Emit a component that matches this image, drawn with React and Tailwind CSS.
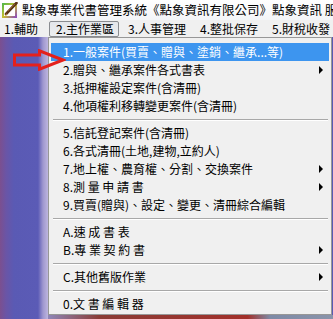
import React from "react";

const items = [
  { t: "1.一般案件(買賣、贈與、塗銷、繼承...等)", hl: true },
  { t: "2.贈與、繼承案件各式書表", sub: true },
  { t: "3.抵押權設定案件(含清冊)" },
  { t: "4.他項權利移轉變更案件(含清冊)" },
  { sep: true },
  { t: "5.信託登記案件(含清冊)" },
  { t: "6.各式清冊(土地,建物,立約人)" },
  { t: "7.地上權、農育權、分割、交換案件", sub: true },
  { t: "8.測 量 申 請 書", sub: true },
  { t: "9.買賣(贈與)、設定、變更、清冊綜合編輯" },
  { sep: true },
  { t: "A.速 成 書 表" },
  { t: "B.專 業 契 約 書", sub: true },
  { sep: true },
  { t: "C.其他舊版作業", sub: true },
  { sep: true },
  { t: "0.文 書 編 輯 器" },
];

function AppIcon() {
  return (
    <svg className="shrink-0" width="16" height="16" viewBox="0 0 16 16">
      <defs>
        <linearGradient id="ib" x1="0" y1="0" x2="1" y2="1">
          <stop offset="0" stopColor="#58b848" />
          <stop offset="0.5" stopColor="#c8c030" />
          <stop offset="1" stopColor="#9050b8" />
        </linearGradient>
      </defs>
      <rect x="1" y="2" width="13" height="13" fill="#ffffff" stroke="url(#ib)" strokeWidth="2" />
      <path d="M14.5 1 L4 12" stroke="#5a3418" strokeWidth="2.6" strokeLinecap="round" />
      <path d="M4.6 11.4 L2.6 14 L5.2 12.2 Z" fill="#e0a040" />
      <path d="M13 2 L6 9" stroke="#a06a30" strokeWidth="0.8" />
    </svg>
  );
}

export default function App() {
  return (
    <div
      className="relative w-[333px] h-[319px] overflow-hidden bg-[#5a5ab4] text-black"
      style={{ fontFamily: "'Noto Sans CJK TC', 'Noto Sans', sans-serif" }}
    >
      {/* Title bar */}
      <div className="h-[20px] flex items-center bg-[linear-gradient(to_bottom,#ffffff,#f3f5f8)] pl-[2px] whitespace-nowrap overflow-hidden">
        <AppIcon />
        <span className="ml-[4px] text-[12.5px] leading-none">
          點象專業代書管理系統《點象資訊有限公司》點象資訊 服務
        </span>
      </div>

      {/* Menu bar */}
      <div className="h-[17px] flex items-center bg-[#f0f0f0] pl-[4px] text-[12px] leading-none whitespace-nowrap">
        <div className="pr-[11px] h-[15px] flex items-center">1.輔助</div>
        <div className="pl-[6px] pr-[4px] h-[16px] flex items-center border border-[#8a8c90] rounded-[2px] bg-[linear-gradient(to_bottom,#e4e6ea,#eceef0)]">
          2.主作業區
        </div>
        <div className="pl-[9px] pr-[7px] h-[15px] flex items-center">3.人事管理</div>
        <div className="px-[7px] h-[15px] flex items-center">4.整批保存</div>
        <div className="pl-[7px] h-[15px] flex items-center">5.財稅收發</div>
      </div>

      {/* Body */}
      <div className="flex h-[282px]">
        <div className="w-[48px] h-full bg-[linear-gradient(to_right,#7b4f8f_0px,#6a55a6_6px,#5a5ab4_14px,#5b5bb6_38px,#9f97cf_43px,#bdb5df_48px)]" />
        <div className="flex-1 flex flex-col">
          <div className="h-[278px] mr-[1px] border border-[#979797] bg-[#f0f0f0] pt-[5px] pb-[1px] text-[12px] leading-none">
            {items.map((it, i) =>
              it.sep ? (
                <div key={i} className="h-[9px] flex flex-col justify-center ml-[4px] mr-[3px]">
                  <div className="h-[1px] bg-[#a8a8a8]" />
                  <div className="h-[1px] bg-[#ffffff]" />
                </div>
              ) : (
                <div
                  key={i}
                  className={
                    it.hl
                      ? "h-[18px] mx-[2px] flex items-center justify-between pl-[12px] pr-[6px] bg-[#3d95ef] text-white whitespace-pre"
                      : "h-[18px] mx-[2px] flex items-center justify-between pl-[12px] pr-[6px] whitespace-pre"
                  }
                >
                  <span>{it.t}</span>
                  {it.sub ? (
                    <span className="w-0 h-0 border-y-[4px] border-y-transparent border-l-[4px] border-l-black" />
                  ) : null}
                </div>
              )
            )}
          </div>
          <div className="h-[4px] bg-[linear-gradient(to_right,#8e86b8_0%,#8a3c36_18%,#a2302a_70%,#7e8aa6_78%,#8a94aa_100%)]" />
        </div>
      </div>

      {/* Red annotation arrow */}
      <svg className="absolute left-[12px] top-[49px]" width="54" height="22" viewBox="0 0 54 22">
        <path
          d="M2.5 6 L27.5 6 L27.5 1.8 L51 11 L27.5 20.2 L27.5 16 L2.5 16 Z"
          fill="none"
          stroke="#e4201c"
          strokeWidth="3"
          strokeLinejoin="miter"
        />
      </svg>
    </div>
  );
}
